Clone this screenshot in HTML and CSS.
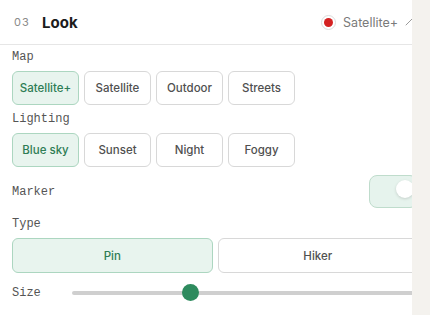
FILE: index.html
```html
<!DOCTYPE html>
<html lang="en">

<head>
  <meta charset="UTF-8">
  <title>Look</title>
  <link rel="stylesheet" href="styles.css">
</head>

<body>

  <div class="page">
    <div class="panel">
      <div class="panel-inner">

        <div class="step-head">
          <span class="step-num">03</span>
          <span class="step-title">Look</span>
          <div class="step-summary">
            <span class="dot"><span></span></span>
            <span class="summary-text">Satellite+</span>
            <svg class="edit" width="10" height="10" viewBox="0 0 10 10">
              <path d="M2 8 L8 2" stroke="#9a9a9a" stroke-width="1" fill="none" stroke-linecap="round"/>
            </svg>
          </div>
        </div>

        <div class="step-body">
          <div class="label">Map</div>
          <div class="choices">
            <button class="choice active">Satellite+</button>
            <button class="choice">Satellite</button>
            <button class="choice">Outdoor</button>
            <button class="choice">Streets</button>
          </div>

          <div class="label">Lighting</div>
          <div class="choices">
            <button class="choice active">Blue sky</button>
            <button class="choice">Sunset</button>
            <button class="choice">Night</button>
            <button class="choice">Foggy</button>
          </div>

          <div class="row marker-row">
            <span class="label-inline">Marker</span>
            <div class="toggle on"><span class="knob"></span></div>
          </div>

          <div class="label">Type</div>
          <div class="choices halves">
            <button class="choice active">Pin</button>
            <button class="choice">Hiker</button>
          </div>

          <div class="row size-row">
            <span class="label-inline size-label">Size</span>
            <div class="slider">
              <div class="track"></div>
              <span class="thumb" style="left: 110px"></span>
            </div>
          </div>
        </div>

      </div>
    </div>
    <div class="side"></div>
  </div>

</body>

</html>
```

FILE: styles.css
```css
body {
  margin: 0;
  font-family: Inter, 'Noto Sans', sans-serif;
  color: #333;
  background-color: #fff;
}

.page {
  display: flex;
  height: 315px;
}

.panel {
  width: 412px;
  overflow: hidden;
  background: #fff;
}

.panel-inner {
  width: 430px;
}

.side {
  flex: 1;
  background-color: #f4f2ee;
}

/* header */

.step-head {
  display: flex;
  align-items: center;
  height: 44px;
  padding: 0 16px 0 14px;
  border-bottom: 1px solid #e6e6e6;
}

.step-num {
  font-size: 11px;
  letter-spacing: 1px;
  color: #8a8a8a;
  width: 28px;
}

.step-title {
  font-size: 15px;
  font-weight: 700;
  color: #1c1c1c;
}

.step-summary {
  margin-left: auto;
  display: flex;
  align-items: center;
}

.dot {
  width: 13px;
  height: 13px;
  border: 1px solid #dcdcdc;
  border-radius: 50%;
  display: flex;
  align-items: center;
  justify-content: center;
  margin-right: 7px;
}

.dot span {
  width: 9px;
  height: 9px;
  border-radius: 50%;
  background-color: #d42222;
}

.summary-text {
  font-size: 12.5px;
  color: #7a7a7a;
  margin-right: 6px;
}

/* body */

.step-body {
  padding: 5px 12px 0 12px;
}

.label,
.label-inline {
  font-family: 'Liberation Mono', 'DejaVu Sans Mono', monospace;
  font-size: 12px;
  line-height: 14px;
  color: #555;
}

.label {
  margin-bottom: 7px;
}

.choices {
  display: flex;
  gap: 5px;
  margin-bottom: 7px;
}

.choice {
  width: 67px;
  height: 34px;
  background: #fff;
  border: 1px solid #d8d8d8;
  border-radius: 6px;
  font-family: Inter, 'Noto Sans', sans-serif;
  font-size: 11.5px;
  font-weight: 500;
  color: #505050;
  padding: 0;
}

.choice.active {
  background-color: #e8f4ee;
  border-color: #acd6c0;
  color: #2e7d55;
}

.halves .choice {
  flex: 1;
  height: 35px;
}

.halves {
  margin-bottom: 11px;
}

.row {
  display: flex;
  align-items: center;
}

.marker-row {
  justify-content: space-between;
  padding-top: 1px;
  margin-bottom: 9px;
}

.toggle {
  width: 44px;
  height: 31px;
  border: 1px solid #bfdccc;
  border-radius: 8px;
  background-color: #e6f3ed;
  display: flex;
  align-items: center;
  justify-content: flex-end;
  padding-right: 3px;
  box-sizing: content-box;
}

.knob {
  width: 18px;
  height: 18px;
  border-radius: 50%;
  background: #fff;
  box-shadow: 0 1px 3px rgba(0, 0, 0, 0.15);
  margin-top: -6px;
}

.size-label {
  width: 60px;
}

.slider {
  flex: 1;
  position: relative;
  height: 17px;
  display: flex;
  align-items: center;
}

.track {
  width: 100%;
  height: 4px;
  border-radius: 2px;
  background-color: #cfcfcf;
}

.thumb {
  position: absolute;
  top: 0;
  width: 17px;
  height: 17px;
  border-radius: 50%;
  background-color: #2e8b5e;
}
```
